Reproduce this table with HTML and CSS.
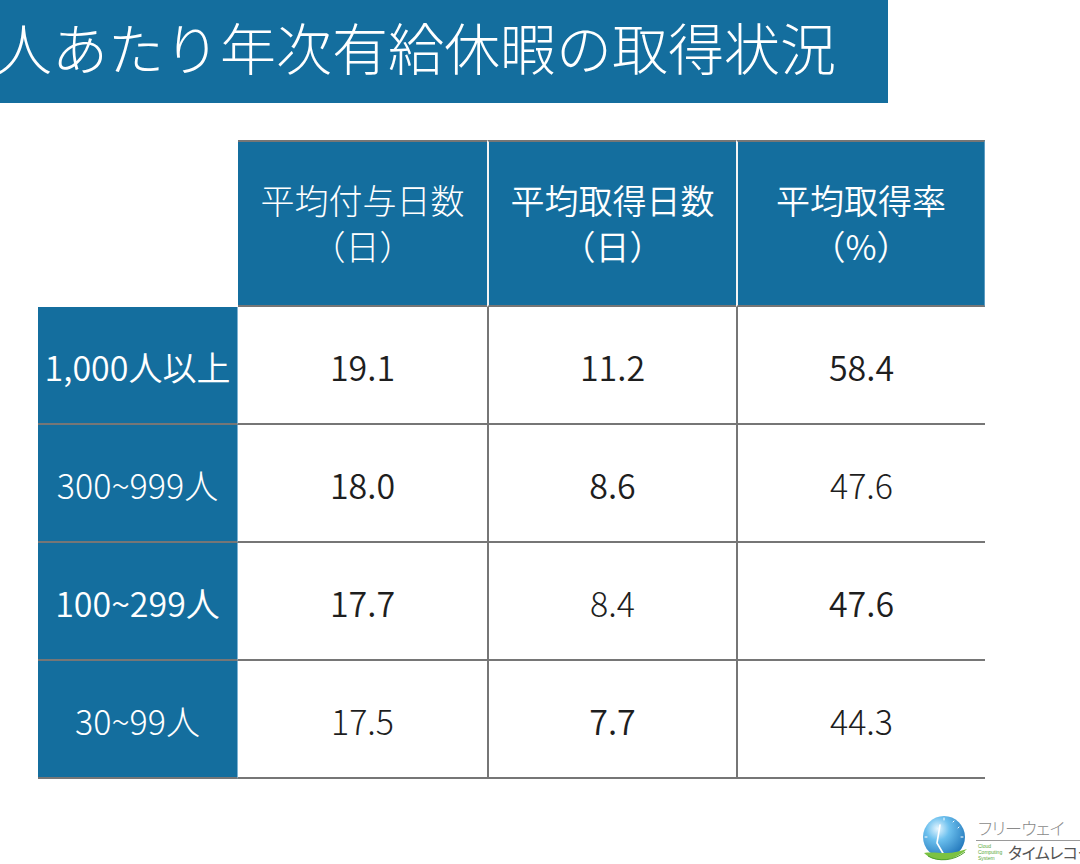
FILE: index.html
```html
<!DOCTYPE html>
<html lang="ja">
<head>
<meta charset="utf-8">
<link rel="stylesheet" href="styles.css">
</head>
<body>
<div class="title"><h1>人あたり年次有給休暇の取得状況</h1></div>
<div class="grid">
  <div class="corner"></div>
  <div class="th c1 light">平均付与日数<br>（日）</div>
  <div class="th c2">平均取得日数<br>（日）</div>
  <div class="th c3">平均取得率<br>（%）</div>

  <div class="rh">1,000人以上</div>
  <div class="td d1">19.1</div>
  <div class="td dn">11.2</div>
  <div class="td dn">58.4</div>

  <div class="rh light">300~999人</div>
  <div class="td d1">18.0</div>
  <div class="td dn">8.6</div>
  <div class="td dn light">47.6</div>

  <div class="rh">100~299人</div>
  <div class="td d1">17.7</div>
  <div class="td dn light">8.4</div>
  <div class="td dn">47.6</div>

  <div class="rh light">30~99人</div>
  <div class="td d1 light">17.5</div>
  <div class="td dn">7.7</div>
  <div class="td dn light">44.3</div>
</div>
<div class="footer">
  <div class="logo">
    <svg class="mark" width="50" height="50" viewBox="0 0 50 50">
      <defs>
        <radialGradient id="g" cx="0.35" cy="0.3" r="0.8">
          <stop offset="0" stop-color="#e6f6ff"/>
          <stop offset="0.35" stop-color="#6cc0ee"/>
          <stop offset="1" stop-color="#1a6fb5"/>
        </radialGradient>
      </defs>
      <circle cx="24" cy="22" r="21" fill="url(#g)"/>
      <g stroke="#fff" stroke-width="1" stroke-linecap="round">
        <line x1="24" y1="3" x2="24" y2="5"/>
        <line x1="41" y1="22" x2="43" y2="22"/>
        <line x1="24" y1="39" x2="24" y2="41"/>
        <line x1="5" y1="22" x2="7" y2="22"/>
        <line x1="33" y1="7" x2="34" y2="6"/>
        <line x1="38" y1="13" x2="39" y2="12"/>
      </g>
      <polyline points="20,10 17,28 24,40" fill="none" stroke="#fff" stroke-width="1.6" stroke-linecap="round" stroke-linejoin="round"/>
      <path d="M4 38 C14 48 32 48 47 34 C40 36 34 38 26 38 C18 38 10 37 4 38 Z" fill="#7cc242"/>
      <path d="M8 41 C18 47 34 46 45 37" fill="none" stroke="#4ea02d" stroke-width="1"/>
    </svg>
    <div class="brand">
      <div class="top">フリーウェイ</div>
      <div class="bottom">
        <div class="cloud">Cloud<br>Computing<br>System</div>
        <div class="jp">タイムレコーダー</div>
      </div>
    </div>
  </div>
</div>
</body>
</html>
```
FILE: styles.css
```css
html, body {
  margin: 0;
  padding: 0;
  width: 1080px;
  height: 864px;
  overflow: hidden;
  background: #ffffff;
  font-family: "Noto Sans CJK JP", "Noto Sans", sans-serif;
}
.title {
  width: 888px;
  height: 103px;
  background: #146e9e;
  overflow: hidden;
}
.title h1 {
  margin: 0 0 0 -4px;
  padding-top: 4px;
  font-size: 56px;
  line-height: 84px;
  font-weight: 300;
  color: #ffffff;
  white-space: nowrap;
}
.grid {
  margin: 37px 0 0 38px;
  display: grid;
  grid-template-columns: 200px 249px 249px 249px;
  grid-template-rows: 167px repeat(4, 118px);
  width: 947px;
}
.grid > div {
  box-sizing: border-box;
  display: flex;
  align-items: center;
  justify-content: center;
  text-align: center;
  font-size: 34px;
  font-weight: 350;
}
.grid > div.light { font-weight: 300; }
.th {
  background: #146e9e;
  color: #ffffff;
  border-top: 2px solid #767676;
  border-bottom: 2px solid #767676;
  line-height: 46px;
  padding-bottom: 2px;
}
.th.c2, .th.c3 { border-left: 2px solid #f4f4f4; }
.th.c3 { border-right: 1px solid #5d9cc2; }
.rh {
  background: #146e9e;
  color: #ffffff;
  border-bottom: 2px solid #767676;
  border-right: 1px solid #7eb3d3;
  padding-top: 2px;
}
.td {
  color: #1e1e1e;
  border-bottom: 2px solid #767676;
  padding-top: 2px;
}
.td.dn { border-left: 2px solid #767676; }
.footer {
  margin-top: 36px;
  padding-left: 920px;
  display: flex;
  white-space: nowrap;
}
.logo {
  display: flex;
  align-items: flex-start;
}
.mark { flex: none; display: block; }
.brand {
  margin-left: 6px;
  padding-top: 3px;
}
.brand .top {
  font-size: 17px;
  line-height: 20px;
  color: #8a8a8a;
  font-weight: 300;
  font-feature-settings: "palt";
  letter-spacing: -0.5px;
  padding-left: 2px;
  padding-bottom: 2px;
  border-bottom: 1px solid #9a9a9a;
  width: 110px;
}
.brand .bottom {
  display: flex;
  align-items: center;
  margin-top: 1px;
}
.brand .cloud {
  font-family: "Liberation Sans", sans-serif;
  font-size: 5px;
  line-height: 6px;
  color: #5aa83a;
  width: 30px;
  padding-left: 2px;
}
.brand .jp {
  font-size: 16px;
  line-height: 20px;
  color: #555555;
  font-feature-settings: "palt";
  letter-spacing: -0.5px;
}
```
